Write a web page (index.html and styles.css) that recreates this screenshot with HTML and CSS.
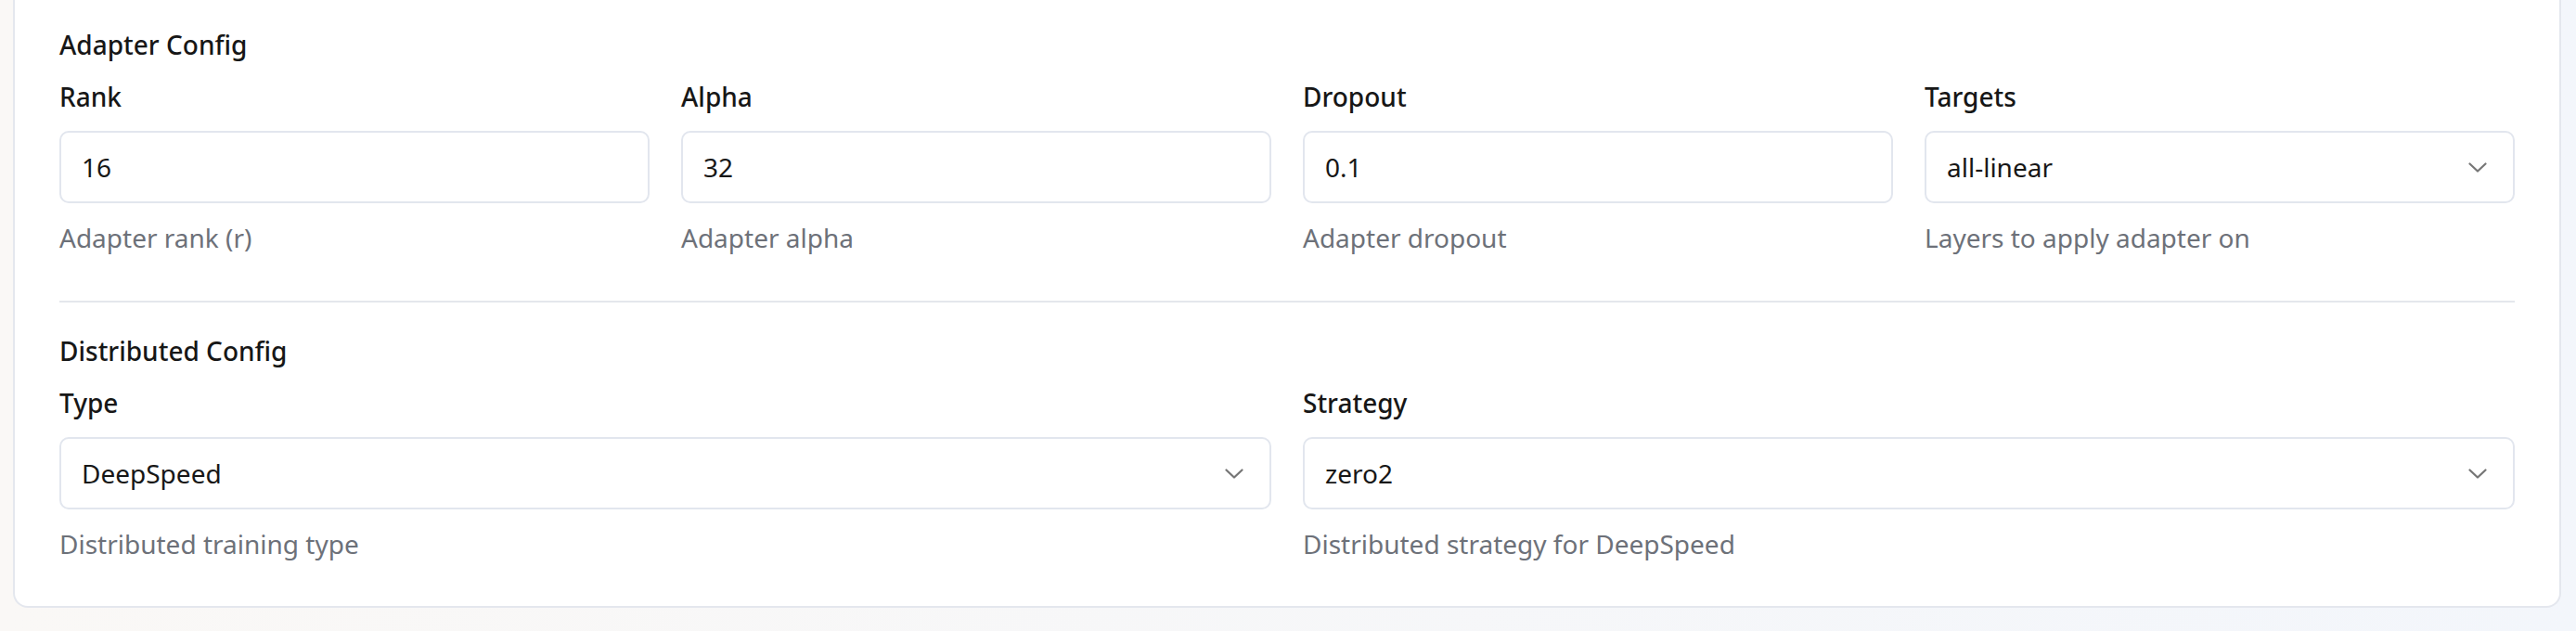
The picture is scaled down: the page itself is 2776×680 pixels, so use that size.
FILE: index.html
```html
<!DOCTYPE html>
<html lang="en">
<head>
    <meta charset="UTF-8">
    <meta name="viewport" content="width=device-width, initial-scale=1.0">
    <title>Training Config</title>
    <link rel="stylesheet" href="styles.css">
</head>
<body>
    <div class="card">
        <section class="section">
            <h3 class="section-title">Adapter Config</h3>
            <div class="grid grid-4">
                <div class="field">
                    <label class="label" for="rank">Rank</label>
                    <input class="control" id="rank" type="text" value="16">
                    <p class="help">Adapter rank (r)</p>
                </div>
                <div class="field">
                    <label class="label" for="alpha">Alpha</label>
                    <input class="control" id="alpha" type="text" value="32">
                    <p class="help">Adapter alpha</p>
                </div>
                <div class="field">
                    <label class="label" for="dropout">Dropout</label>
                    <input class="control" id="dropout" type="text" value="0.1">
                    <p class="help">Adapter dropout</p>
                </div>
                <div class="field">
                    <span class="label">Targets</span>
                    <div class="control select">
                        <span>all-linear</span>
                        <svg class="chevron" width="20" height="11" viewBox="0 0 20 11"><polyline points="1.5,1.5 10,9.5 18.5,1.5"/></svg>
                    </div>
                    <p class="help">Layers to apply adapter on</p>
                </div>
            </div>
        </section>

        <section class="section">
            <h3 class="section-title">Distributed Config</h3>
            <div class="grid grid-2">
                <div class="field">
                    <span class="label">Type</span>
                    <div class="control select">
                        <span>DeepSpeed</span>
                        <svg class="chevron" width="20" height="11" viewBox="0 0 20 11"><polyline points="1.5,1.5 10,9.5 18.5,1.5"/></svg>
                    </div>
                    <p class="help">Distributed training type</p>
                </div>
                <div class="field">
                    <span class="label">Strategy</span>
                    <div class="control select">
                        <span>zero2</span>
                        <svg class="chevron" width="20" height="11" viewBox="0 0 20 11"><polyline points="1.5,1.5 10,9.5 18.5,1.5"/></svg>
                    </div>
                    <p class="help">Distributed strategy for DeepSpeed</p>
                </div>
            </div>
        </section>
    </div>
</body>
</html>
```

FILE: styles.css
```css
body {
    margin: 0;
    padding: 0 16px 0 14px;
    min-height: 680px;
    box-sizing: border-box;
    font-family: "Noto Sans", "Open Sans", sans-serif;
    font-size: 28px;
    line-height: 42px;
    color: #171717;
    background: linear-gradient(90deg, #faf8f6, #f3f6fb);
}
.card {
    background-color: #fff;
    border: 2px solid #e4e7ee;
    border-top: none;
    border-radius: 0 0 16px 16px;
    padding: 0 48px;
}
.section {
    padding: 31px 0 46px;
}
.section:first-child {
    padding-top: 27px;
    padding-bottom: 47px;
}
.section + .section {
    border-top: 2px solid #e4e7ec;
}
.section-title {
    margin: 0 0 14px;
    font-size: 28px;
    font-weight: 500;
}
.grid {
    display: grid;
    column-gap: 34px;
}
.grid-4 {
    grid-template-columns: repeat(4, 1fr);
}
.grid-2 {
    grid-template-columns: repeat(2, 1fr);
}
.field {
    display: flex;
    flex-direction: column;
    gap: 16px;
    min-width: 0;
}
.label {
    font-weight: 500;
}
.control {
    box-sizing: border-box;
    width: 100%;
    height: 78px;
    margin: 0;
    padding: 0 22px;
    border: 2px solid #e2e6ee;
    border-radius: 10px;
    background-color: #fff;
    font-family: inherit;
    font-size: 28px;
    color: #171717;
    outline: none;
}
.select {
    display: flex;
    align-items: center;
    justify-content: space-between;
    padding-right: 28px;
}
.chevron {
    fill: none;
    stroke: #767676;
    stroke-width: 2.2;
    stroke-linecap: round;
    stroke-linejoin: round;
}
.help {
    margin: 0;
    color: #6d7179;
}
```
